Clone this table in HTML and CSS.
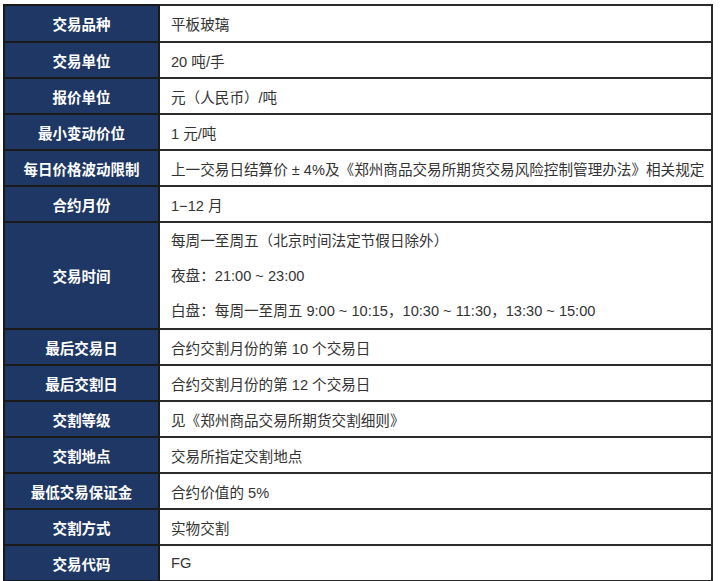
FILE: index.html
```html
<!DOCTYPE html>
<html lang="zh-CN">
<head>
<meta charset="utf-8">
<link rel="stylesheet" href="styles.css">
</head>
<body>
<table class="spec">
  <tr class="tall"><th>交易品种</th><td>平板玻璃</td></tr>
  <tr><th>交易单位</th><td>20 吨/手</td></tr>
  <tr><th>报价单位</th><td>元（人民币）/吨</td></tr>
  <tr><th>最小变动价位</th><td>1 元/吨</td></tr>
  <tr><th>每日价格波动限制</th><td>上一交易日结算价 ± 4%及《郑州商品交易所期货交易风险控制管理办法》相关规定</td></tr>
  <tr><th>合约月份</th><td>1−12 月</td></tr>
  <tr class="multi"><th>交易时间</th><td>
    <div class="line">每周一至周五（北京时间法定节假日除外）</div>
    <div class="line">夜盘：21:00 ~ 23:00</div>
    <div class="line">白盘：每周一至周五 9:00 ~ 10:15，10:30 ~ 11:30，13:30 ~ 15:00</div>
  </td></tr>
  <tr><th>最后交易日</th><td>合约交割月份的第 10 个交易日</td></tr>
  <tr><th>最后交割日</th><td>合约交割月份的第 12 个交易日</td></tr>
  <tr><th>交割等级</th><td>见《郑州商品交易所期货交割细则》</td></tr>
  <tr><th>交割地点</th><td>交易所指定交割地点</td></tr>
  <tr><th>最低交易保证金</th><td>合约价值的 5%</td></tr>
  <tr><th>交割方式</th><td>实物交割</td></tr>
  <tr><th>交易代码</th><td>FG</td></tr>
</table>
</body>
</html>
```
FILE: styles.css
```css
html, body {
  margin: 0;
  padding: 0;
  background: #ffffff;
}
body {
  padding: 4px 0 0 3px;
  font-family: "Liberation Sans", Arial, "Noto Sans CJK SC", sans-serif;
}
.spec {
  border-collapse: collapse;
  width: 710px;
}
.spec th,
.spec td {
  border: 2px solid #2b2b2b;
  height: 36px;
  padding: 0;
  box-sizing: border-box;
  vertical-align: middle;
}
.spec .tall th,
.spec .tall td {
  height: 37px;
}
.spec th {
  width: 155px;
  background: #1e3764;
  color: #ffffff;
  font-weight: bold;
  font-size: 14.5px;
  text-align: center;
  border-color: #1a1a1a;
}
.spec td {
  background: #ffffff;
  color: #333333;
  font-size: 14.6px;
  text-align: left;
  padding-left: 11px;
  white-space: nowrap;
}
.spec .multi td {
  height: 106px;
}
.spec .line {
  height: 35px;
  line-height: 36px;
}
```
